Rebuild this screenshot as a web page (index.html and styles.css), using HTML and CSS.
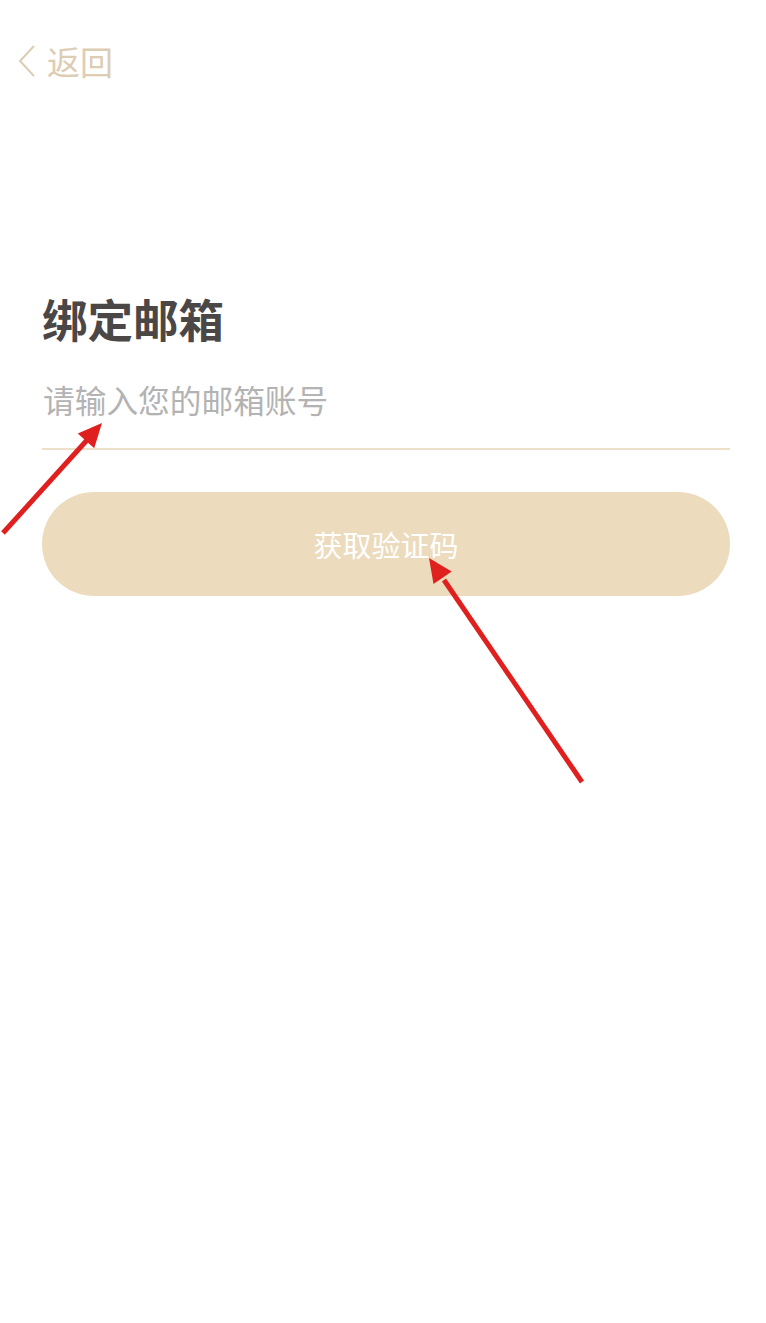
FILE: index.html
```html
<!DOCTYPE html>
<html lang="zh-CN">
<head>
<meta charset="utf-8">
<title>绑定邮箱</title>
<link rel="stylesheet" href="styles.css">
</head>
<body>
<div class="page">
  <header class="topbar">
    <a class="back" href="#">
      <svg class="back-icon" width="18" height="32" viewBox="0 0 18 32"><polyline points="16,1 2,16 16,31" fill="none" stroke="#dccdb3" stroke-width="2"/></svg>
      <span class="back-text">返回</span>
    </a>
  </header>
  <main class="content">
    <h1 class="title">绑定邮箱</h1>
    <div class="field">
      <input class="email-input" type="text" placeholder="请输入您的邮箱账号">
    </div>
    <button class="submit" type="button">获取验证码</button>
  </main>
  <svg class="annotations" width="766" height="1323" viewBox="0 0 766 1323">
    <line x1="3" y1="533" x2="88" y2="439" stroke="#e0201f" stroke-width="5"/>
    <polygon points="102,423 94.2,448.2 77.8,433.4" fill="#e0201f"/>
    <line x1="582" y1="782" x2="444" y2="580" stroke="#e0201f" stroke-width="5"/>
    <polygon points="429,558 451.7,571.6 433.5,584" fill="#e0201f"/>
  </svg>
</div>
</body>
</html>
```

FILE: styles.css
```css
html, body {
  margin: 0;
  padding: 0;
  background: #ffffff;
}
body {
  font-family: "Noto Sans CJK SC", "Noto Sans", sans-serif;
}
.page {
  position: relative;
  width: 766px;
  height: 1323px;
  overflow: hidden;
}
.topbar {
  padding: 44px 0 0 18px;
  height: 36px;
}
.back {
  display: flex;
  align-items: center;
  gap: 11px;
  text-decoration: none;
  height: 34px;
}
.back-icon {
  display: block;
}
.back-text {
  font-size: 33px;
  line-height: 34px;
  color: #dccdb3;
}
.content {
  padding: 0 36px 0 42px;
}
.title {
  margin: 212px 0 0 0;
  font-size: 45.5px;
  line-height: 52px;
  font-weight: 700;
  color: #4a4746;
}
.field {
  margin-top: 22px;
  padding-bottom: 16px;
  border-bottom: 2px solid #eddfc8;
}
.email-input {
  display: block;
  width: 100%;
  box-sizing: border-box;
  border: none;
  outline: none;
  background: transparent;
  padding: 0 0 0 1px;
  height: 66px;
  font-family: "Noto Sans CJK SC", "Noto Sans", sans-serif;
  font-size: 31.7px;
  color: #4a4746;
}
.email-input::placeholder {
  color: #b3b3b3;
}
.submit {
  display: block;
  width: 100%;
  margin-top: 42px;
  height: 104px;
  border: none;
  border-radius: 52px;
  background: #ecdbbd;
  color: #ffffff;
  font-family: "Noto Sans CJK SC", "Noto Sans", sans-serif;
  font-size: 29px;
  padding: 0;
}
.annotations {
  position: absolute;
  left: 0;
  top: 0;
  pointer-events: none;
}
```
